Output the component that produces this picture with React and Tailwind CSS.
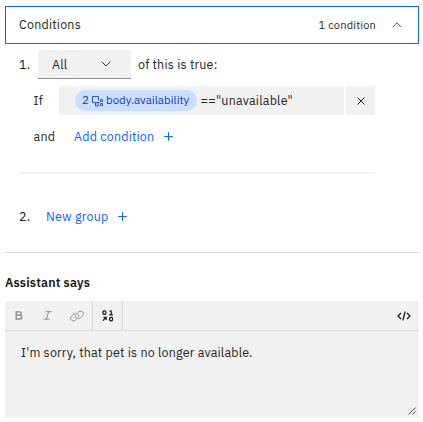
import React from "react";

const Plus = () => (
  <svg width="9" height="9" viewBox="0 0 9 9" className="shrink-0" stroke="#0f62fe" strokeWidth="1.1" fill="none">
    <path d="M4.5 0.3v8.4M0.3 4.5h8.4" />
  </svg>
);

const Variable = () => (
  <svg width="12" height="12" viewBox="0 0 12 12" fill="none" stroke="#2a55bb" strokeWidth="1">
    <path d="M3 7.500H0.500v-6h6v4M3.500 7.500h2.500v3.500H3.500zM8.500 4.500h2v2h-2zM8.500 8.500h2v2h-2zM6 7.500h1.500" />
  </svg>
);

const Bold = () => (
  <svg width="8" height="9" viewBox="0 0 8 9" fill="none" stroke="#8d8d8d" strokeWidth="1.4">
    <path d="M1.200 0.900h3.300a1.700 1.700 0 0 1 0 3.400H1.200zM1.200 4.300h3.700a1.850 1.850 0 0 1 0 3.700H1.200z" />
  </svg>
);

const Italic = () => (
  <svg width="9" height="9" viewBox="0 0 9 9" fill="none" stroke="#8d8d8d" strokeWidth="1">
    <path d="M2.700 0.700H8.500M0.500 8.200h5.800M5.700 0.700L3.300 8.200" />
  </svg>
);

const LinkIcon = () => (
  <svg width="14" height="12" viewBox="0 0 14 12" fill="none" stroke="#8d8d8d" strokeWidth="1" strokeLinecap="round">
    <path d="M7.600 3.800c1.500.7 1.600 2.200.4 3.600L6.400 9.200c-1.300 1.500-3.300 2-4.700 1.100S.3 7.700 1.600 6.200l1.600-1.800c.6-.7 1.300-1 2-1.200" />
    <path d="M6.400 8.200c-1.500-.7-1.600-2.200-.4-3.600l1.600-1.800c1.300-1.500 3.300-2 4.700-1.100s1.400 2.600.1 4.100l-1.600 1.800c-.6.7-1.300 1-2 1.200" />
  </svg>
);

const DataIcon = () => (
  <svg width="12" height="12" viewBox="0 0 12 12" fill="none" stroke="#161616" strokeWidth="1.200">
    <rect x="0.900" y="0.900" width="3" height="3.500" rx="1.300" />
    <path d="M7.500 1.200h1.700v3.500M7.300 4.800H11M1.500 7.300h2.700v2.700M4.100 7.400L0.900 10.700" />
    <rect x="7.600" y="7.300" width="3" height="3.500" rx="1.300" />
  </svg>
);

export default function App() {
  return (
    <main className="h-[422px] w-[423px] overflow-hidden bg-white pl-[5px] pr-1 pt-1.5 font-['IBM_Plex_Sans','Noto_Sans',sans-serif] text-[12.5px] leading-[18px] tracking-[0.2px] text-[#262626]">
      <header className="flex h-[38px] items-center border border-[#0f62fe] pl-[13px] pr-4">
        <span className="pb-0.5">Conditions</span>
        <span className="ml-auto mr-4 text-[11px]">1 condition</span>
        <svg width="10" height="6" viewBox="0 0 10 6" fill="none" stroke="#525252">
          <path d="M0.700 5.200L5 0.900L9.300 5.200" />
        </svg>
      </header>

      <section className="h-[209px] border-b border-[#d9d9d9] pl-3.5">
        <div className="flex h-[35px] items-end">
          <span className="w-[19px] pb-1.5">1.</span>
          <button className="flex h-[29px] w-[93px] items-center justify-between border-b border-[#8d8d8d] bg-[#f1f1f1] pl-3.5 pr-5 tracking-[0.2px]">
            <span>All</span>
            <svg width="10" height="6" viewBox="0 0 10 6" fill="none" stroke="#393939">
              <path d="M0.700 0.700L5 5L9.300 0.700" />
            </svg>
          </button>
          <span className="ml-[7px] pb-1.5">of this is true:</span>
        </div>
        <div className="mt-[7px] flex h-[29px] items-center pl-3.5">
          <span className="w-[26px] pb-px pl-[0.5px]">If</span>
          <div className="flex h-full w-[285px] items-center bg-[#f1f1f1] pl-4">
            <span className="flex h-[21px] w-[122px] items-center rounded-full bg-[#cbdeff] pl-[7px] text-[11.500px] tracking-normal text-[#0f3fae]">
              <span className="w-[10px] pb-px">2</span>
              <Variable />
              <span className="ml-[2px] pb-px">body.availability</span>
            </span>
            <span className="ml-[3.5px] pb-0.5">==&quot;unavailable&quot;</span>
          </div>
          <button className="ml-0.5 flex h-full w-[29px] items-center justify-center bg-[#f1f1f1]">
            <svg width="8" height="8" viewBox="0 0 8 8" fill="none" stroke="#262626">
              <path d="M0.500 0.500l7 7M7.500 0.500l-7 7" />
            </svg>
          </button>
        </div>
        <div className="mt-[12px] flex h-[18px] items-center pl-3.5">
          <span className="w-[41px] pl-[0.5px]">and</span>
          <span className="mr-2.5 w-[80px] whitespace-nowrap text-[#0f62fe]">Add condition</span>
          <Plus />
        </div>
        <div className="mt-[27px] h-0.5 w-[356px] bg-[#f1f1f1]" />
        <div className="mt-[33px] flex h-[18px] items-center">
          <span className="w-[27px]">2.</span>
          <span className="mr-2.5 w-[62px] whitespace-nowrap text-[#0f62fe]">New group</span>
          <Plus />
        </div>
      </section>

      <h2 className="mt-5 h-[18px] text-[12.500px] font-semibold tracking-[0.16px] text-[#161616]">Assistant says</h2>
      <section className="mt-2.5 flex h-[117px] flex-col bg-[#f1f1f1]">
        <div className="flex h-[30px] items-center border-b border-[#dadada]">
          <div className="flex h-full w-[88px] items-center border-r border-[#dadada] pl-2.5">
            <Bold />
            <span className="ml-5"><Italic /></span>
            <span className="ml-[18px]"><LinkIcon /></span>
          </div>
          <div className="flex h-full w-[30px] items-center justify-center border-r border-[#dadada]">
            <DataIcon />
          </div>
          <svg className="ml-auto mr-[8px]" width="14" height="10" viewBox="0 0 14 10" fill="none" stroke="#161616" strokeWidth="1.200">
            <path d="M4 2L1 5L4 8M10 2L13 5L10 8M8.200 0.500L5.800 9.500" />
          </svg>
        </div>
        <p className="pl-4 pt-3 tracking-[0.18px]">I&apos;m sorry, that pet is no longer available.</p>
        <svg className="mb-[3px] ml-auto mr-[3px] mt-auto" width="8" height="8" viewBox="0 0 8 8" fill="none" stroke="#393939" strokeWidth="0.900">
          <path d="M0.500 7.500l7-7M4.500 7.500l3-3" />
        </svg>
      </section>
    </main>
  );
}
